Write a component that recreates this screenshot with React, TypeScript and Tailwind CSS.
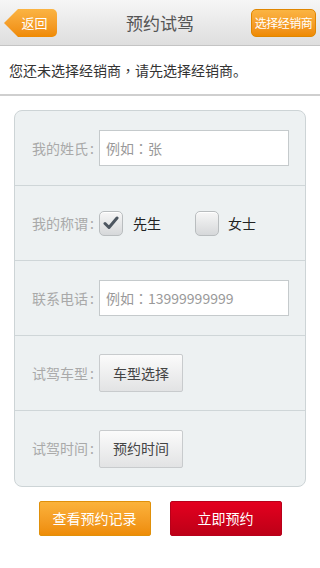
import { useState } from "react";

const font = { fontFamily: '"Noto Sans CJK SC", "Noto Sans", sans-serif' };
const tc = { fontFamily: '"Noto Sans CJK TC", sans-serif' };

function FormRow({ label, children, last }: { label: string; children: React.ReactNode; last?: boolean }) {
  return (
    <div className={`flex h-[75px] items-center pl-[17px] ${last ? "" : "border-b border-[#cfd6d8]"}`}>
      <span className="w-[67px] shrink-0 whitespace-nowrap text-[14px] text-[#a9a9a9]">
        {label}
        <span className="ml-[2px]">:</span>
      </span>
      {children}
    </div>
  );
}

function Check({ on, onClick }: { on: boolean; onClick: () => void }) {
  return (
    <button
      onClick={onClick}
      className="flex h-[25px] w-[24px] items-center justify-center rounded-[5px] border border-[#b9bdbf] bg-gradient-to-b from-[#f7f7f7] to-[#d6d8da] shadow-[inset_0_1px_0_#fff]"
    >
      {on && (
        <svg width="16" height="14" viewBox="0 0 16 14">
          <path d="M2 7.5 L6 11.5 L14 2" fill="none" stroke="#4d5660" strokeWidth="3" strokeLinecap="round" strokeLinejoin="round" />
        </svg>
      )}
    </button>
  );
}

export default function App() {
  const [male, setMale] = useState(true);

  return (
    <div className="h-[568px] w-[320px] overflow-hidden bg-white" style={font}>
      {/* header */}
      <div className="relative flex h-[46px] items-center justify-center border-b border-[#c4c4c4] bg-gradient-to-b from-[#f6f6f6] to-[#dedede]">
        <span className="text-[17px] text-[#555]">预约试驾</span>
        <button className="absolute left-[4px] top-[9px] flex h-[28px] w-[53px] items-center justify-center rounded-r-[5px] bg-gradient-to-b from-[#fbb442] to-[#ef8a00] pl-[8px] text-[13px] text-white [clip-path:polygon(14px_0,100%_0,100%_100%,14px_100%,0_50%)]">
          返回
        </button>
        <button className="absolute right-[4px] top-[9px] flex h-[28px] w-[65px] items-center justify-center rounded-[5px] border border-[#e08600] bg-gradient-to-b from-[#fbb442] to-[#ef8a00] text-[12px] tracking-[-0.5px] text-white">
          选择经销商
        </button>
      </div>

      {/* notice */}
      <div className="flex h-[50px] items-center border-b-2 border-[#cfcfcf] pl-[9px] text-[14px] text-[#333]">
        您还未选择经销商<span style={tc}>，</span>请先选择经销商。
      </div>

      {/* form card */}
      <div className="mx-[14px] mt-[14px] overflow-hidden rounded-[8px] border border-[#cdd4d6] bg-[#edf1f2]">
        <FormRow label="我的姓氏">
          <div className="flex h-[36px] w-[190px] items-center border border-[#c5cacc] bg-white pl-[6px] text-[14px] text-[#999]">
            例如<span style={tc}>：</span>张
          </div>
        </FormRow>
        <FormRow label="我的称谓">
          <div className="flex items-center">
            <Check on={male} onClick={() => setMale(true)} />
            <span className="ml-[10px] text-[14px] text-[#222]">先生</span>
            <div className="ml-[34px]">
              <Check on={!male} onClick={() => setMale(false)} />
            </div>
            <span className="ml-[9px] text-[14px] text-[#222]">女士</span>
          </div>
        </FormRow>
        <FormRow label="联系电话">
          <div className="flex h-[36px] w-[190px] items-center border border-[#c5cacc] bg-white pl-[6px] text-[14px] text-[#999]">
            例如<span style={tc}>：</span>13999999999
          </div>
        </FormRow>
        <FormRow label="试驾车型">
          <button className="h-[38px] w-[84px] rounded-[2px] border border-[#c8cbcd] bg-gradient-to-b from-[#fbfbfb] to-[#e2e3e4] text-[14px] text-[#444]">
            车型选择
          </button>
        </FormRow>
        <FormRow label="试驾时间" last>
          <button className="h-[38px] w-[84px] rounded-[2px] border border-[#c8cbcd] bg-gradient-to-b from-[#fbfbfb] to-[#e2e3e4] text-[14px] text-[#444]">
            预约时间
          </button>
        </FormRow>
      </div>

      {/* actions */}
      <div className="mt-[14px] flex justify-center gap-[19px]">
        <button className="h-[35px] w-[112px] rounded-[2px] border border-[#e0900a] bg-gradient-to-b from-[#fbb23a] to-[#ee8c05] text-[14px] text-white">
          查看预约记录
        </button>
        <button className="h-[35px] w-[112px] rounded-[2px] border border-[#b8001a] bg-gradient-to-b from-[#e4001f] to-[#bd0017] text-[14px] text-white">
          立即预约
        </button>
      </div>
    </div>
  );
}
